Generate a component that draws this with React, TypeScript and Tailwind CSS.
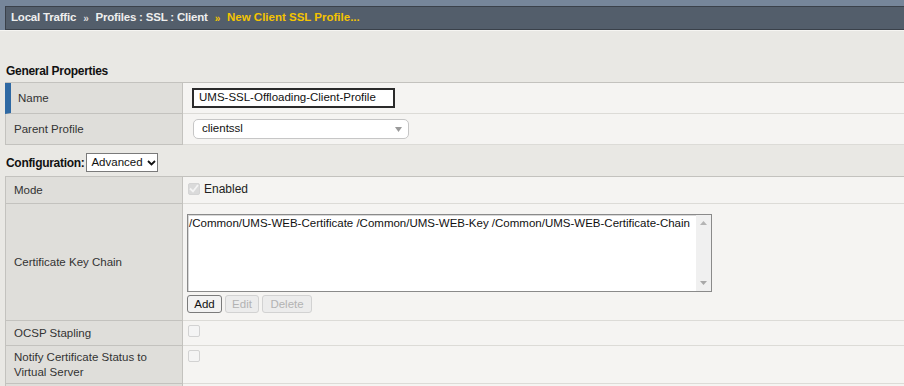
import React from "react"

const font = "font-['Liberation_Sans',Arial,sans-serif]"

function Crumbs() {
  return (
    <div className="bg-[#76869a] pt-[6px] pl-[5px]">
      <div className="h-[24px] bg-[#535e6b] border-y border-l border-[#3a414a] flex items-center pl-[5px] text-[11.5px] font-bold tracking-[-0.2px] text-[#eeeeee]">
        <span>Local Traffic</span>
        <span className="mx-[7px] text-[10px] text-[#dddddd]">»</span>
        <span>Profiles : SSL : Client</span>
        <span className="mx-[7px] text-[10px] text-[#f2c200]">»</span>
        <span className="text-[#f5c400] tracking-[0px]">New Client SSL Profile...</span>
      </div>
    </div>
  )
}

function Row({
  label,
  h,
  children,
  accent = false,
  top = "pt-[4px]",
  center = false,
}: {
  label: React.ReactNode
  h: string
  children?: React.ReactNode
  accent?: boolean
  top?: string
  center?: boolean
}) {
  return (
    <div className={`flex ${h}`}>
      <div
        className={`w-[178px] shrink-0 flex items-center bg-[#dfdeda] border-b border-r border-[#c3c2be] ${
          accent ? "border-l-[6px] border-l-[#2f69a3] pl-[7px]" : "border-l pl-[8px]"
        } text-[#333333] leading-[15px]`}
      >
        {label}
      </div>
      <div
        className={`flex-1 bg-[#f5f4f2] border-b border-[#dcdbd7] pl-[4px] ${
          center ? "flex items-center" : top
        }`}
      >
        {children}
      </div>
    </div>
  )
}

function EmptyBox() {
  return <span className="block w-[12px] h-[12px] ml-[1px] rounded-[2px] border border-[#d2d2d2] bg-[#f4f4f4]" />
}

export default function App() {
  return (
    <div className={`w-[904px] h-[386px] overflow-hidden bg-[#e9e8e4] ${font} text-[11.5px] text-[#222222]`}>
      <Crumbs />
      <div className="h-px bg-[#f6f5f2]" />

      <div className="pl-[5px]">
        <div className="mt-[33px] h-[14px] pl-[1px] flex items-center font-bold text-[12px] tracking-[-0.3px] text-[#111111]">
          General Properties
        </div>

        <div className="mt-[4px] border-t border-[#c3c2be]">
          <Row label="Name" h="h-[31px]" accent center>
            <div className="ml-[5px] w-[203px] h-[20px] border-2 border-[#2b2b2b] bg-white flex items-center pl-[5px] text-[11.5px] text-[#111111]">
              UMS-SSL-Offloading-Client-Profile
            </div>
          </Row>
          <Row label="Parent Profile" h="h-[31px]" center>
            <div className="ml-[6px] w-[216px] h-[20px] rounded-[5px] border border-[#c6c6c6] bg-white flex items-center justify-between pl-[8px] pr-[6px] text-[11.5px] text-[#111111]">
              <span>clientssl</span>
              <svg width="7" height="5" viewBox="0 0 7 5">
                <path d="M0 0 L7 0 L3.5 5 Z" fill="#9a9a9a" />
              </svg>
            </div>
          </Row>
        </div>

        <div className="mt-[8px] flex items-center h-[19px]">
          <span className="pl-[1px] font-bold text-[12px] tracking-[-0.3px] text-[#111111]">Configuration:</span>
          <div className="ml-[2px] w-[72px] h-[19px] border border-[#7a7a7a] bg-white flex items-center pl-[4px] gap-[4px] text-[11.5px] text-[#111111]">
            <span>Advanced</span>
            <svg width="9" height="6" viewBox="0 0 9 6">
              <path d="M1 1 L4.5 4.5 L8 1" fill="none" stroke="#111111" strokeWidth="1.8" />
            </svg>
          </div>
        </div>

        <div className="mt-[4px] border-t border-[#c3c2be]">
          <Row label="Mode" h="h-[27px]">
            <div className="flex items-center gap-[4px] h-[13px] mt-[1px]">
              <span className="w-[12px] h-[12px] ml-[1px] rounded-[2px] bg-[#dadada] border border-[#d4d4d4] flex items-center justify-center">
                <svg width="10" height="9" viewBox="0 0 10 9">
                  <path d="M1 4.5 L4 7.5 L9 1" fill="none" stroke="#f4f4f4" strokeWidth="1.8" />
                </svg>
              </span>
              <span className="text-[#222222] text-[12px]">Enabled</span>
            </div>
          </Row>
          <Row label="Certificate Key Chain" h="h-[117px]" top="pt-[10px]">
            <div className="w-[525px] h-[78px] border border-[#8a8a8a] bg-white flex shadow-[inset_1px_1px_0_#d8d8d8]">
              <div className="flex-1 pl-[1px] pt-[1px] leading-[15px] text-[#111111] whitespace-nowrap overflow-hidden">
                /Common/UMS-WEB-Certificate /Common/UMS-WEB-Key /Common/UMS-WEB-Certificate-Chain
              </div>
              <div className="w-[15px] bg-[#f0f0f0] flex flex-col items-center justify-between py-[6px]">
                <svg width="7" height="4" viewBox="0 0 7 4">
                  <path d="M0 4 L7 4 L3.5 0 Z" fill="#b4b4b4" />
                </svg>
                <svg width="7" height="4" viewBox="0 0 7 4">
                  <path d="M0 0 L7 0 L3.5 4 Z" fill="#a8a8a8" />
                </svg>
              </div>
            </div>
            <div className="mt-[3px] flex gap-[3px] h-[18px]">
              <button className="w-[35px] h-[18px] rounded-[3px] border border-[#7b7b7b] bg-[#f2f2f2] text-[11.5px] text-[#111111]">
                Add
              </button>
              <button className="w-[34px] h-[18px] rounded-[3px] border border-[#d2d2d2] bg-[#ececec] text-[11.5px] text-[#b3b3b3]">
                Edit
              </button>
              <button className="w-[50px] h-[18px] rounded-[3px] border border-[#d2d2d2] bg-[#ececec] text-[11.5px] text-[#b3b3b3]">
                Delete
              </button>
            </div>
          </Row>
          <Row label="OCSP Stapling" h="h-[25px]">
            <EmptyBox />
          </Row>
          <Row
            label={
              <span>
                Notify Certificate Status to
                <br />
                Virtual Server
              </span>
            }
            h="h-[38px]"
          >
            <EmptyBox />
          </Row>
          <Row label="" h="h-[30px]" />
        </div>
      </div>
    </div>
  )
}
